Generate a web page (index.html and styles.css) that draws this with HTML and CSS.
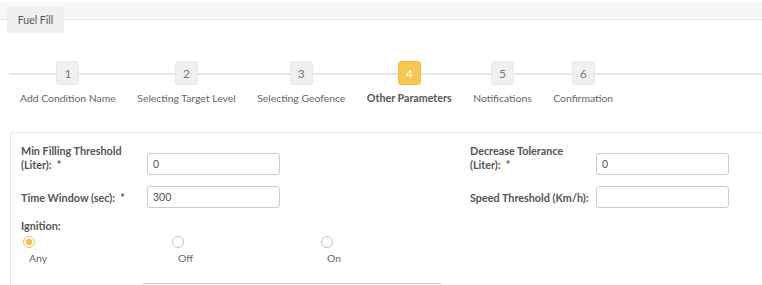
FILE: index.html
```html
<!DOCTYPE html>
<html lang="en">
<head>
  <meta charset="UTF-8">
  <meta name="viewport" content="width=device-width, initial-scale=1.0">
  <title>Fuel Fill</title>
  <link rel="stylesheet" href="styles.css">
</head>
<body>
  <div class="tabbar">
    <div class="tab">Fuel Fill</div>
  </div>

  <div class="stepper">
    <div class="step"><span class="step-num">1</span><span class="step-label">Add Condition Name</span></div>
    <div class="step"><span class="step-num">2</span><span class="step-label">Selecting Target Level</span></div>
    <div class="step"><span class="step-num">3</span><span class="step-label">Selecting Geofence</span></div>
    <div class="step active"><span class="step-num">4</span><span class="step-label">Other Parameters</span></div>
    <div class="step"><span class="step-num">5</span><span class="step-label">Notifications</span></div>
    <div class="step"><span class="step-num">6</span><span class="step-label">Confirmation</span></div>
  </div>

  <div class="card">
    <div class="form-row">
      <div class="field">
        <label class="field-label">Min Filling Threshold<br>(Liter): &nbsp;*</label>
        <input class="field-input" type="text" value="0">
      </div>
      <div class="field">
        <label class="field-label">Decrease Tolerance<br>(Liter): &nbsp;*</label>
        <input class="field-input" type="text" value="0">
      </div>
    </div>
    <div class="form-row">
      <div class="field">
        <label class="field-label">Time Window (sec): &nbsp;*</label>
        <input class="field-input" type="text" value="300">
      </div>
      <div class="field">
        <label class="field-label">Speed Threshold (Km/h):</label>
        <input class="field-input" type="text" value="">
      </div>
    </div>

    <div class="ignition">
      <div class="field-label">Ignition:</div>
      <div class="radio-group">
        <div class="radio-option checked"><span class="radio"></span><span class="radio-label">Any</span></div>
        <div class="radio-option"><span class="radio"></span><span class="radio-label">Off</span></div>
        <div class="radio-option"><span class="radio"></span><span class="radio-label">On</span></div>
      </div>
    </div>

    <div class="next-row">
      <input class="wide-input" type="text">
    </div>
  </div>
</body>
</html>
```

FILE: styles.css
```css
body {
  margin: 0;
  font-family: Lato, "Open Sans", Arial, sans-serif;
  font-size: 10.4px;
  color: #666;
  background: #fff;
  overflow: hidden;
}

.tabbar {
  margin-top: 2px;
  height: 18px;
  padding: 5px 0 0 7px;
  box-sizing: border-box;
  background: #f7f7f7;
  border-bottom: 1px solid #e6e6e6;
}

.tab {
  display: inline-flex;
  align-items: center;
  justify-content: center;
  width: 57px;
  height: 26px;
  background: #efefef;
  border-radius: 2px;
  color: #555;
  font-size: 10.5px;
}

.stepper {
  position: relative;
  display: flex;
  gap: 21.5px;
  margin: 41px 0 0 9px;
  padding-left: 11px;
}

.stepper::before {
  content: "";
  position: absolute;
  left: 0;
  right: 0;
  top: 12px;
  height: 2px;
  background: #e6e6e6;
}

.step {
  position: relative;
  display: flex;
  flex-direction: column;
  align-items: center;
}

.step-num {
  display: flex;
  align-items: center;
  justify-content: center;
  width: 23px;
  height: 24px;
  box-sizing: border-box;
  border: 1px solid #e8e8e8;
  border-radius: 3px;
  background: #f0f0f0;
  color: #777;
  font-size: 12px;
}

.step-label {
  margin-top: 6px;
  white-space: nowrap;
  line-height: 14px;
}

.step.active .step-num {
  background: #f9c74f;
  border-color: #f5c040;
  color: #fff;
}

.step.active .step-label {
  font-size: 10.7px;
  font-weight: bold;
  color: #555;
}

.card {
  margin: 27px 0 0 10px;
  padding: 11px 0 0 10px;
  border: 1px solid #e6e6e6;
  border-right: none;
  border-bottom: none;
  border-radius: 4px 0 0 0;
}

.form-row {
  display: flex;
  margin-bottom: 11px;
}

.field {
  display: flex;
  flex-shrink: 0;
  align-items: flex-end;
  width: 449px;
}

.field-label {
  width: 126px;
  padding-bottom: 3px;
  line-height: 14px;
  font-size: 10.8px;
  font-weight: bold;
  color: #555;
}

.field-input {
  width: 133px;
  height: 22px;
  box-sizing: border-box;
  padding: 0 5px;
  border: 1px solid #ccc;
  border-radius: 3px;
  font-family: inherit;
  font-size: 10.5px;
  color: #555;
}

.ignition .field-label {
  padding-bottom: 0;
}

.radio-group {
  display: flex;
  margin-top: 3px;
  padding-left: 2px;
}

.radio-option {
  display: flex;
  flex-direction: column;
  width: 149px;
}

.radio {
  width: 12px;
  height: 12px;
  box-sizing: border-box;
  border: 1px solid #c4c4c4;
  border-radius: 50%;
  background: #fff;
}

.radio-option.checked .radio {
  border-color: #f7c24a;
  background: radial-gradient(circle, #f7c24a 0 3px, #fff 3.5px);
}

.radio-label {
  margin: 3px 0 0 6px;
  line-height: 14px;
}

.next-row {
  margin-top: 18px;
  padding-left: 121px;
}

.wide-input {
  width: 300px;
  height: 22px;
  box-sizing: border-box;
  border: 1px solid #ccc;
  border-radius: 3px;
}
```
